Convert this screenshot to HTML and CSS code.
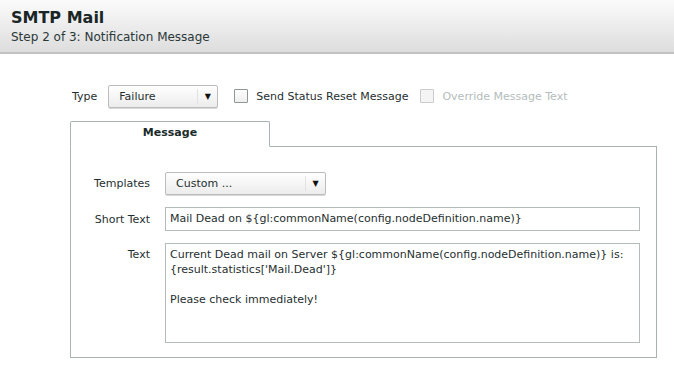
FILE: index.html
```html
<!DOCTYPE html>
<html lang="en">
  <head>
    <meta charset="UTF-8" />
    <title>SMTP Mail</title>
    <link rel="stylesheet" href="styles.css">
  </head>
  <body>
    <div class="header">
      <h1>SMTP Mail</h1>
      <div class="step">Step 2 of 3: Notification Message</div>
    </div>
    <div class="content">
      <div class="options">
        <span class="label">Type</span>
        <div class="select type-select">
          <span class="value">Failure</span>
          <span class="arrow">&#9660;</span>
        </div>
        <label class="check">
          <span class="box"></span>
          Send Status Reset Message
        </label>
        <label class="check disabled">
          <span class="box"></span>
          Override Message Text
        </label>
      </div>
      <div class="tabs">
        <div class="tab">Message</div>
      </div>
      <div class="panel">
        <div class="row">
          <div class="field-label">Templates</div>
          <div class="select tpl-select">
            <span class="value">Custom ...</span>
            <span class="arrow">&#9660;</span>
          </div>
        </div>
        <div class="row">
          <div class="field-label">Short Text</div>
          <div class="input">Mail Dead on ${gl:commonName(config.nodeDefinition.name)}</div>
        </div>
        <div class="row top">
          <div class="field-label">Text</div>
          <div class="input textarea">Current Dead mail on Server ${gl:commonName(config.nodeDefinition.name)} is:<br>{result.statistics['Mail.Dead']}<br><br>Please check immediately!</div>
        </div>
      </div>
    </div>
  </body>
</html>
```

FILE: styles.css
```css
body {
  margin: 0;
  padding: 0;
  font-family: "DejaVu Sans", Verdana, sans-serif;
  font-size: 11px;
  color: #1f2f2f;
  background-color: #fff;
}
.header {
  height: 54px;
  box-sizing: border-box;
  padding: 8px 11px 0;
  background: linear-gradient(to bottom, #fbfbfb, #dddddd);
  border-bottom: 2px solid #c2c2c2;
}
.header h1 {
  margin: 0;
  font-size: 16px;
  font-weight: bold;
  line-height: 20px;
  color: #1a2626;
}
.step {
  margin-top: 1px;
  font-size: 12px;
  line-height: 16px;
  color: #2a3838;
}
.content {
  padding: 30px 17px 0 70px;
}
.options {
  display: flex;
  align-items: center;
  height: 24px;
  padding-left: 2px;
}
.label {
  margin-right: 11px;
}
.select {
  display: flex;
  align-items: center;
  box-sizing: border-box;
  height: 23px;
  border: 1px solid #bcbcbc;
  border-radius: 2px;
  background: linear-gradient(to bottom, #ffffff, #ececec);
  box-shadow: 0 1px 0 #d8d8d8;
}
.select .value {
  flex: 1;
  padding-left: 10px;
}
.select .arrow {
  width: 19px;
  height: 15px;
  border-left: 1px solid #e2e2e2;
  font-size: 8px;
  line-height: 15px;
  text-align: center;
  color: #111;
}
.type-select {
  width: 110px;
}
.tpl-select {
  width: 161px;
}
.check {
  display: flex;
  align-items: center;
  margin-left: 16px;
  color: #1f2f2f;
}
.check .box {
  width: 12px;
  height: 12px;
  margin-right: 8px;
  border: 1px solid #8e9696;
  border-radius: 1px;
  background: linear-gradient(to bottom, #ffffff, #eeeeee);
}
.check.disabled {
  margin-left: 12px;
  color: #b4bcbc;
}
.check.disabled .box {
  border-color: #c8cccc;
  background: #f4f4f4;
}
.tabs {
  display: flex;
  margin-top: 13px;
}
.tab {
  width: 198px;
  height: 24px;
  margin-bottom: -1px;
  border: 1px solid #a9b2b2;
  border-bottom: 1px solid #fff;
  border-radius: 2px 2px 0 0;
  background-color: #fff;
  text-align: center;
  font-weight: bold;
  line-height: 22px;
  color: #1a2a2a;
  position: relative;
}
.panel {
  border: 1px solid #a9b2b2;
  padding: 25px 16px 14px 0;
}
.row {
  display: flex;
  align-items: center;
  margin-bottom: 12px;
}
.row.top {
  align-items: flex-start;
  margin-bottom: 0;
}
.row.top .field-label {
  padding-top: 5px;
}
.field-label {
  width: 79px;
  margin-right: 15px;
  text-align: right;
}
.input {
  flex: 1;
  min-width: 0;
  box-sizing: border-box;
  height: 24px;
  padding: 0 4px;
  border: 1px solid #b3bbbb;
  line-height: 22px;
  white-space: nowrap;
  overflow: hidden;
}
.textarea {
  height: 100px;
  padding-top: 3px;
  line-height: 15px;
}
```
